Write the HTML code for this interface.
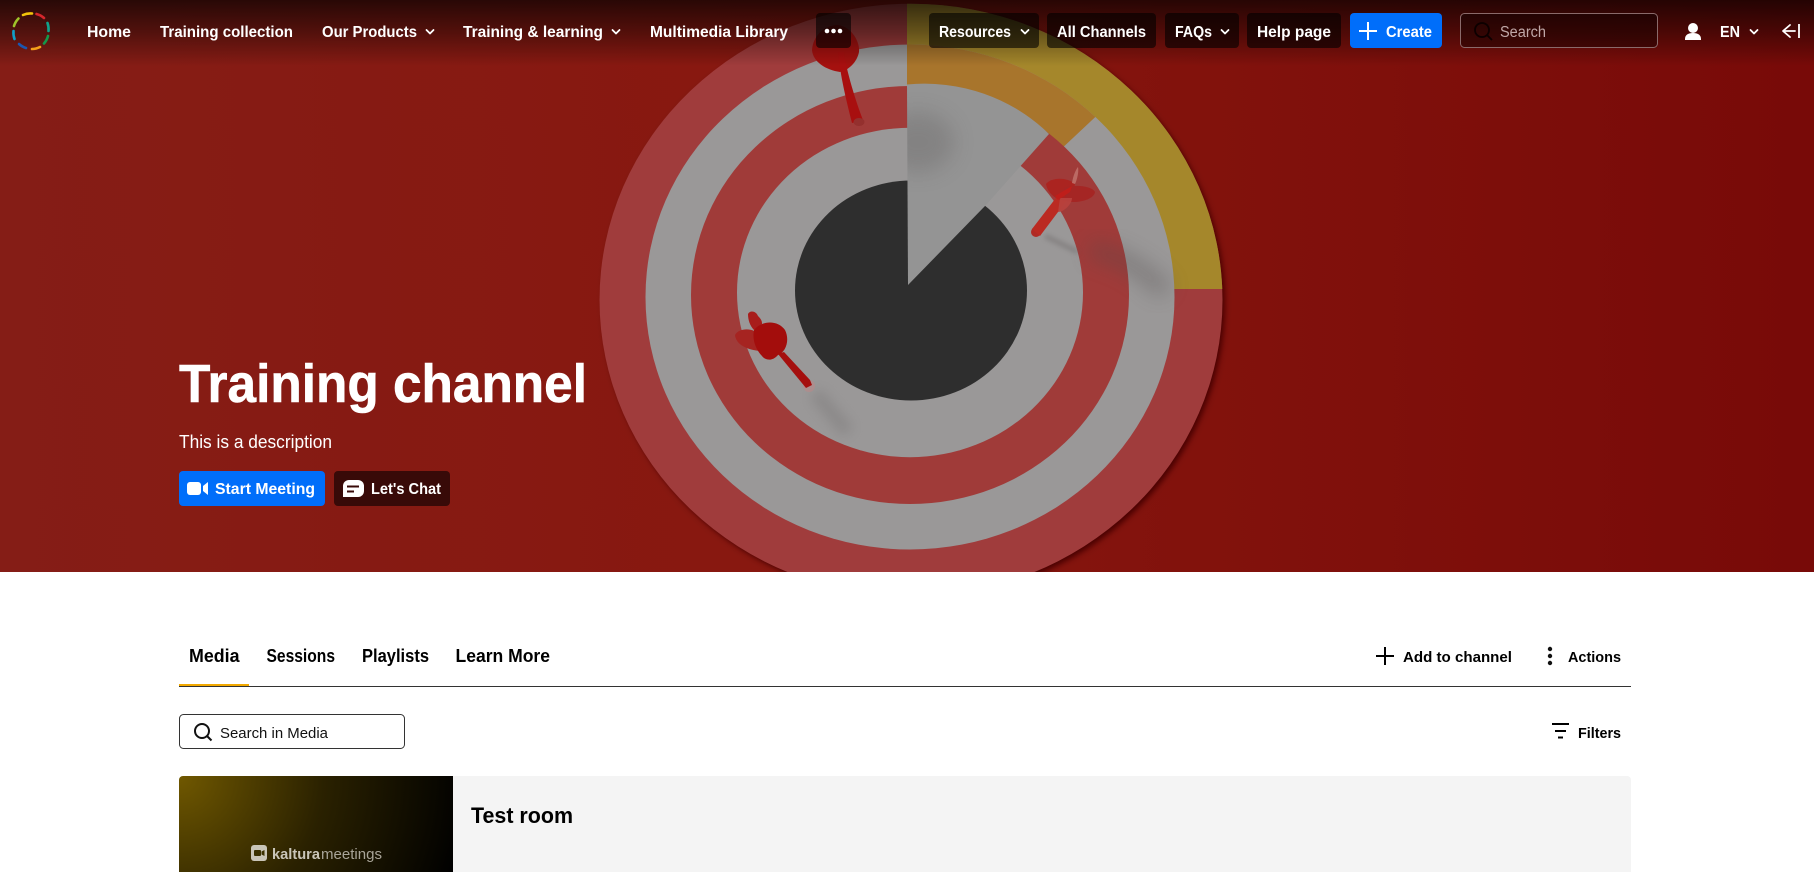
<!DOCTYPE html>
<html lang="en">
<head>
<meta charset="utf-8">
<title>Training channel</title>
<style>
html,body{margin:0;padding:0;width:1814px;height:872px;overflow:hidden;background:#fff}
svg{display:block;position:absolute;left:0;top:0}
text{font-family:"Liberation Sans",Arial,sans-serif}
.n{font-size:15.5px;font-weight:700;fill:#fff}
.k{font-size:15px;font-weight:700;fill:#000}
.tab{font-size:18px;font-weight:700;fill:#000}
.ch{fill:none;stroke:#fff;stroke-width:1.8;stroke-linecap:round;stroke-linejoin:round}
.b{fill:#000;fill-opacity:.6}
</style>
</head>
<body>
<svg width="1814" height="872" viewBox="0 0 1814 872" xmlns="http://www.w3.org/2000/svg">
<defs>
<linearGradient id="bg" x1="0" x2="1" y1="0" y2="0"><stop offset="0" stop-color="#851d16"/><stop offset=".45" stop-color="#88170f"/><stop offset="1" stop-color="#780a08"/></linearGradient>
<linearGradient id="top" x1="0" x2="0" y1="0" y2="1"><stop offset="0" stop-color="#000" stop-opacity=".7"/><stop offset=".5" stop-color="#000" stop-opacity=".38"/><stop offset="1" stop-color="#000" stop-opacity="0"/></linearGradient>
<radialGradient id="thumb" gradientUnits="userSpaceOnUse" cx="179" cy="776" r="290"><stop offset="0" stop-color="#705800"/><stop offset=".5" stop-color="#2a2100"/><stop offset="1" stop-color="#000"/></radialGradient>
<filter id="bl" x="-50%" y="-50%" width="200%" height="200%"><feGaussianBlur stdDeviation="10"/></filter>
<filter id="bm" x="-50%" y="-50%" width="200%" height="200%"><feGaussianBlur stdDeviation="6"/></filter>
<filter id="bx" x="-50%" y="-50%" width="200%" height="200%"><feGaussianBlur stdDeviation="2.500"/></filter>
<filter id="bs" x="-10%" y="-10%" width="120%" height="120%"><feGaussianBlur stdDeviation="3"/></filter>
<clipPath id="hero"><rect width="1814" height="572"/></clipPath>
<clipPath id="thumbc"><path d="M183 776H453V872H179V780a4 4 0 0 1 4-4z"/></clipPath>
<clipPath id="sec"><path d="M907 84.500A173 164.500 0 0 1 1049 134L985 206L908 285Z"/></clipPath>
<clipPath id="quad"><rect x="907" y="0" width="330" height="289"/></clipPath>
<clipPath id="oran"><path d="M907 0H1220L1066 144.500L1000 205H907Z"/></clipPath>
</defs>

<!-- Hero -->
<g clip-path="url(#hero)">
<rect width="1814" height="572" fill="url(#bg)"/>
<ellipse cx="914" cy="303" rx="311" ry="296" fill="#4a0605" filter="url(#bs)"/>
<ellipse cx="911" cy="300" rx="311.500" ry="296.300" fill="#a03c3c"/>
<ellipse cx="911" cy="300" rx="311.500" ry="296.300" fill="#a5872b" clip-path="url(#quad)"/>
<ellipse cx="910" cy="297" rx="264.500" ry="252.500" fill="#9a9898"/>
<ellipse cx="910" cy="297" rx="264.500" ry="252.500" fill="#a8752c" clip-path="url(#oran)"/>
<ellipse cx="910" cy="295" rx="219" ry="209" fill="#a03b39"/>
<ellipse cx="910" cy="292.500" rx="173" ry="164.700" fill="#9a9898"/>
<path d="M1045 236L1078 252" stroke="#5f5a5a" stroke-width="5" opacity=".35" filter="url(#bx)" fill="none"/>
<path d="M1090 250Q1130 256 1166 292" stroke="#4f4a4a" stroke-width="20" opacity=".32" filter="url(#bl)" fill="none"/>
<path d="M815 393L848 432" stroke="#6f6d6d" stroke-width="14" opacity=".35" filter="url(#bm)" fill="none"/>
<ellipse cx="911" cy="290.500" rx="116" ry="110" fill="#2e2e2e"/>
<path d="M907 84.500A173 164.500 0 0 1 1049 134L985 206L908 285Z" fill="#949494"/>
<g clip-path="url(#sec)"><ellipse cx="918" cy="142" rx="36" ry="30" fill="#6a6868" opacity=".38" filter="url(#bl)"/></g>
<!-- dart 1 -->
<path d="M812 50C813 36 824 25 838 25C852 27 860 42 859 52C857 62 849 70 840 72C826 70 813 62 812 50Z" fill="#a5110f"/>
<path d="M838 52L844 52C846 70 856 102 863 120L852 123C846 100 840 74 838 52Z" fill="#a80f0f"/>
<ellipse cx="859" cy="122" rx="5.500" ry="4" fill="#94302e"/>
<!-- dart 2 -->
<circle cx="1036" cy="232" r="5" fill="#b02a24"/>
<path d="M1032 229L1062 190L1070 196L1040 236Z" fill="#bb2a22"/>
<path d="M1046 184C1050 178 1066 176 1075 184L1072 200C1062 204 1048 196 1046 184Z" fill="#ab2420"/>
<path d="M1064 188C1074 184 1092 186 1095 192C1094 200 1076 204 1066 201Z" fill="#a52624"/>
<path d="M1072 183C1073 176 1076 169 1078 167C1079 172 1077 180 1075 184Z" fill="#bb6a64"/>
<path d="M1060 198L1072 198C1072 204 1064 212 1058 212Z" fill="#b8433e" opacity=".9"/>
<path d="M1055 196L1072 186L1070 192L1058 200Z" fill="#bf1e1a"/>
<!-- dart 3 -->
<circle cx="809" cy="386" r="6" fill="#b58a8a" opacity=".7"/>
<path d="M778 354L784 352L810 380L812 385L806 388Z" fill="#a50f0e"/>
<path d="M735 335C738 329 748 328 754 331L760 351C748 350 736 345 735 335Z" fill="#a62421"/>
<path d="M748 314C750 310 756 311 758 316C762 320 762 322 762 324L754 330C750 326 748 320 748 314Z" fill="#a81d1b"/>
<path d="M754 330C762 320 778 320 785 330C790 340 786 352 778 355C772 362 765 360 762 356C756 350 752 340 754 330Z" fill="#a30d0c"/>
<rect width="1814" height="66" fill="url(#top)"/>
</g>

<!-- Logo -->
<g fill="none" stroke-width="2.600" stroke-linecap="round">
<path d="M23 15A18 18 0 0 1 32 13.500" stroke="#f2c40a"/>
<path d="M36.500 14A18 18 0 0 1 44 18" stroke="#d5262c"/>
<path d="M47.500 23A18 18 0 0 1 48.500 31" stroke="#10a38c"/>
<path d="M48 36A18 18 0 0 1 44 43.500" stroke="#14984a"/>
<path d="M40 47A18 18 0 0 1 32 49" stroke="#f5a01a"/>
<path d="M26 48A18 18 0 0 1 19 44" stroke="#1b57b0"/>
<path d="M14.500 39A18 18 0 0 1 13.500 31" stroke="#11a0c8"/>
<path d="M14 26A18 18 0 0 1 18.500 18.500" stroke="#9fc32a"/>
</g>

<!-- Nav left -->
<text class="n" x="87" y="37" textLength="44" lengthAdjust="spacingAndGlyphs">Home</text>
<text class="n" x="160" y="37" textLength="133" lengthAdjust="spacingAndGlyphs">Training collection</text>
<text class="n" x="322" y="37" textLength="95" lengthAdjust="spacingAndGlyphs">Our Products</text>
<path class="ch" d="M426.500 30l3.500 3.500 3.500-3.500"/>
<text class="n" x="463" y="37" textLength="140" lengthAdjust="spacingAndGlyphs">Training &amp; learning</text>
<path class="ch" d="M612.500 30l3.500 3.500 3.500-3.500"/>
<text class="n" x="650" y="37" textLength="138" lengthAdjust="spacingAndGlyphs">Multimedia Library</text>
<rect class="b" x="816" y="13" width="35" height="35" rx="4"/>
<g fill="#fff"><circle cx="827" cy="31" r="2.300"/><circle cx="833.500" cy="31" r="2.300"/><circle cx="840" cy="31" r="2.300"/></g>

<!-- Nav right -->
<rect class="b" x="929" y="13" width="110" height="35" rx="4"/>
<text class="n" x="939" y="37" textLength="72" lengthAdjust="spacingAndGlyphs">Resources</text>
<path class="ch" d="M1021.500 30l3.500 3.500 3.500-3.500"/>
<rect class="b" x="1047" y="13" width="109" height="35" rx="4"/>
<text class="n" x="1057" y="37" textLength="89" lengthAdjust="spacingAndGlyphs">All Channels</text>
<rect class="b" x="1165" y="13" width="74" height="35" rx="4"/>
<text class="n" x="1175" y="37" textLength="37" lengthAdjust="spacingAndGlyphs">FAQs</text>
<path class="ch" d="M1221.500 30l3.500 3.500 3.500-3.500"/>
<rect class="b" x="1247" y="13" width="94" height="35" rx="4"/>
<text class="n" x="1257" y="37" textLength="74" lengthAdjust="spacingAndGlyphs">Help page</text>
<rect x="1350" y="13" width="92" height="35" rx="4" fill="#006efa"/>
<path d="M1368 22v18M1359 31h18" stroke="#fff" stroke-width="2" fill="none"/>
<text class="n" x="1386" y="37" textLength="46" lengthAdjust="spacingAndGlyphs">Create</text>

<rect x="1460.500" y="13.500" width="197" height="34" rx="4" fill="#000" fill-opacity=".35" stroke="#8a6a6a" stroke-width="1"/>
<circle cx="1482" cy="30" r="7" fill="none" stroke="#0c0000" stroke-width="1.800"/>
<path d="M1487 35l5 5" stroke="#0c0000" stroke-width="1.800"/>
<text x="1500" y="37" font-size="15.500" fill="#c0a8a8" textLength="46" lengthAdjust="spacingAndGlyphs">Search</text>

<circle cx="1693" cy="28" r="5" fill="#fff"/>
<path d="M1685 39c0-4 3-6 8-6s8 2 8 6v1h-16z" fill="#fff"/>
<text class="n" x="1720" y="37" textLength="20" lengthAdjust="spacingAndGlyphs">EN</text>
<path class="ch" d="M1750.500 30l3.500 3.500 3.500-3.500"/>
<path d="M1790 25l-7 6 7 6M1783 31h12" fill="none" stroke="#fff" stroke-width="1.800" stroke-linecap="round" stroke-linejoin="round"/>
<path d="M1799 24v14" stroke="#fff" stroke-width="1.800"/>

<!-- Hero text -->
<text x="179" y="402" font-size="54" font-weight="700" fill="#fff" textLength="408" lengthAdjust="spacingAndGlyphs" stroke="#fff" stroke-width=".6">Training channel</text>
<text x="179" y="448" font-size="18" fill="#fff" textLength="153" lengthAdjust="spacingAndGlyphs">This is a description</text>
<rect x="179" y="471" width="146" height="35" rx="4" fill="#006efa"/>
<rect x="187" y="482" width="14" height="13" rx="3" fill="#fff"/>
<path d="M203 486l5-4v13l-5-4z" fill="#fff"/>
<text class="n" x="215" y="494" textLength="100" lengthAdjust="spacingAndGlyphs">Start Meeting</text>
<rect x="334" y="471" width="116" height="35" rx="4" fill="#380a08"/>
<path d="M349 480h9a6 6 0 0 1 6 6v5a6 6 0 0 1-6 6h-15v-11a6 6 0 0 1 6-6z" fill="#fff"/>
<path d="M347 486.500h12M347 491.500h7" stroke="#380a08" stroke-width="2"/>
<text class="n" x="371" y="494" textLength="70" lengthAdjust="spacingAndGlyphs">Let's Chat</text>

<!-- Tabs -->
<text class="tab" x="189" y="662" textLength="50.500" lengthAdjust="spacingAndGlyphs">Media</text>
<text class="tab" x="266.500" y="662" textLength="68.500" lengthAdjust="spacingAndGlyphs">Sessions</text>
<text class="tab" x="362" y="662" textLength="67" lengthAdjust="spacingAndGlyphs">Playlists</text>
<text class="tab" x="455.500" y="662" textLength="94.500" lengthAdjust="spacingAndGlyphs">Learn More</text>
<rect x="179" y="686" width="1452" height="1" fill="#333"/>
<rect x="179" y="684" width="70" height="2" fill="#f2a900"/>

<path d="M1385 647v18M1376 656h18" stroke="#000" stroke-width="2" fill="none"/>
<text class="k" x="1403" y="662" textLength="109" lengthAdjust="spacingAndGlyphs">Add to channel</text>
<g fill="#111"><circle cx="1550" cy="649" r="2.200"/><circle cx="1550" cy="656" r="2.200"/><circle cx="1550" cy="663" r="2.200"/></g>
<text class="k" x="1568" y="662" textLength="53" lengthAdjust="spacingAndGlyphs">Actions</text>

<!-- Search in media -->
<rect x="179.500" y="714.500" width="225" height="34" rx="4" fill="#fff" stroke="#333"/>
<circle cx="202" cy="731" r="7" fill="none" stroke="#111" stroke-width="2"/>
<path d="M207 736l4.500 4.500" stroke="#111" stroke-width="2"/>
<text x="220" y="738" font-size="15" fill="#111" textLength="108" lengthAdjust="spacingAndGlyphs">Search in Media</text>

<path d="M1552 724h17M1555 731h11M1558 737.500h5" stroke="#000" stroke-width="2" fill="none"/>
<text class="k" x="1578" y="738" textLength="43" lengthAdjust="spacingAndGlyphs">Filters</text>

<!-- Card -->
<path d="M183 776H1627a4 4 0 0 1 4 4V872H179V780a4 4 0 0 1 4-4z" fill="#f4f4f4"/>
<g clip-path="url(#thumbc)">
<rect x="179" y="776" width="274" height="96" fill="url(#thumb)"/>
<rect x="251" y="845" width="16" height="16" rx="3" fill="#c9c5b8"/>
<rect x="254" y="850" width="7" height="6" rx="1" fill="#3a3000"/>
<path d="M261.500 851.500l3-1.500v6l-3-1.500z" fill="#3a3000"/>
<text x="272" y="859" font-size="15" font-weight="700" fill="#c9c5b8" textLength="48" lengthAdjust="spacingAndGlyphs">kaltura</text>
<text x="321" y="859" font-size="15" fill="#a8a498" textLength="61" lengthAdjust="spacingAndGlyphs">meetings</text>
</g>
<text x="471" y="823" font-size="22" font-weight="700" fill="#000" textLength="102" lengthAdjust="spacingAndGlyphs">Test room</text>
</svg>
</body>
</html>
